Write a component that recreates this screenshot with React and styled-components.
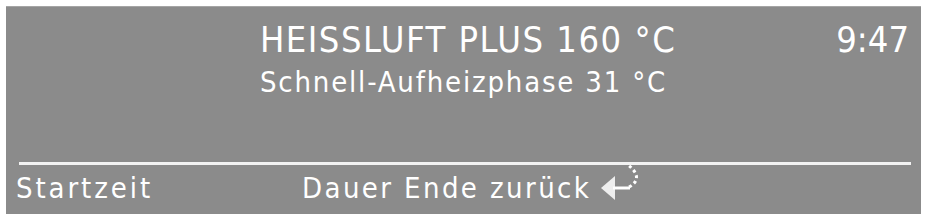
import React from "react"
import styled, { createGlobalStyle } from 'styled-components'

const GlobalStyle = createGlobalStyle`
    body {
        margin: 0;
        background: #ffffff;
        font-family: 'DejaVu Sans Condensed', 'DejaVu Sans', sans-serif;
    }
`

const Frame = styled.div`
    width: 926px;
    height: 217px;
    padding: 6px 5px 3px 6px;
    box-sizing: border-box;
`

const Display = styled.div`
    height: 100%;
    background: #8b8b8b;
    border-top: 1px solid #a5a5a5;
    display: flex;
    flex-direction: column;
    box-sizing: border-box;
    color: #ffffff;
`

const Top = styled.div`
    display: grid;
    grid-template-columns: 254px 1fr auto;
    padding: 13px 12px 0 0;
    flex: 1;
`

const Lines = styled.div`
    grid-column: 2;
    display: flex;
    flex-direction: column;
    gap: 5px;
`

const Title = styled.div`
    font-size: 36px;
    line-height: 40px;
    letter-spacing: 1.5px;
`

const Sub = styled.div`
    font-size: 29px;
    line-height: 34px;
    letter-spacing: 1.8px;
`

const Clock = styled.div`
    grid-column: 3;
    font-size: 36px;
    line-height: 40px;
`

const Rule = styled.div`
    height: 3px;
    background: #f2f2f2;
    margin: 0 10px 0 13px;
`

const Footer = styled.div`
    display: flex;
    align-items: center;
    height: 45px;
    padding: 0 0 4px 10px;
`

const SoftKey = styled.span`
    font-size: 29px;
    letter-spacing: ${p => p.$spacing || '2.4px'};
    width: ${p => p.$w || 'auto'};
`

const Keys = styled.div`
    display: flex;
    align-items: center;
    gap: 6px;
`

const Icon = styled.svg`
    margin-top: -12px;
`

const ReturnIcon = () => (
    <Icon width="46" height="40" viewBox="0 0 46 40">
        <path d="M4 26 L18 14 L18 38 Z" fill="#fff" fillOpacity="0.85" />
        <path d="M16 26 H33" stroke="#fff" strokeWidth="3" fill="none" />
        <path d="M32 25 Q48 16 30 2" stroke="#fff" strokeWidth="3" fill="none" strokeDasharray="3 3" />
    </Icon>
)

export default () => (
    <>
        <GlobalStyle />
        <Frame>
            <Display>
                <Top>
                    <Lines>
                        <Title>HEISSLUFT PLUS 160 °C</Title>
                        <Sub>Schnell-Aufheizphase 31 °C</Sub>
                    </Lines>
                    <Clock>9:47</Clock>
                </Top>
                <Rule />
                <Footer>
                    <SoftKey $w="286px" $spacing="2.9px">Startzeit</SoftKey>
                    <Keys>
                        <SoftKey>Dauer Ende zurück</SoftKey>
                        <ReturnIcon />
                    </Keys>
                </Footer>
            </Display>
        </Frame>
    </>
)
